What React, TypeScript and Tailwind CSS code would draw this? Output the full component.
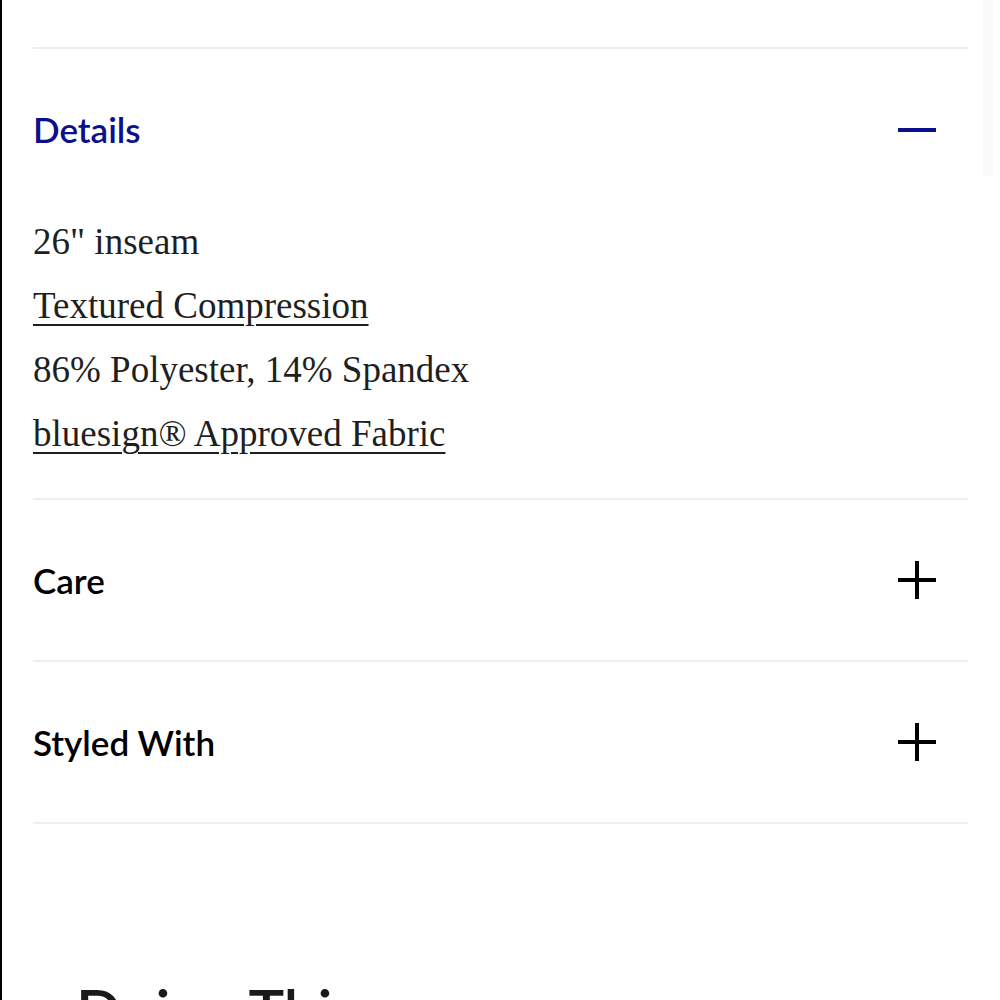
import React from 'react';

const Plus = () => (
  <svg width="38" height="38" viewBox="0 0 38 38" className="shrink-0">
    <rect x="0" y="17" width="38" height="4" fill="#000" />
    <rect x="17" y="0" width="4" height="38" fill="#000" />
  </svg>
);

const Minus = () => (
  <svg width="38" height="38" viewBox="0 0 38 38" className="shrink-0">
    <rect x="0" y="17" width="38" height="4" fill="#0b108e" />
  </svg>
);

const details = [
  { text: '26" inseam', link: false },
  { text: 'Textured Compression', link: true },
  { text: '86% Polyester, 14% Spandex', link: false },
  { text: 'bluesign\u00ae Approved Fabric', link: true },
];

export default function App() {
  return (
    <div className="relative h-[1000px] overflow-hidden bg-white border-l-2 border-black pl-[31px] pr-[32px] pt-[47px]">
      <div className="absolute right-[7px] top-0 h-[176px] w-[10px] bg-[#fafafa]" />

      <div className="border-t-2 border-[#eeeeee]" />

      <div className="flex h-[161px] items-center justify-between pr-[32px]">
        <h3 className="text-[35px] font-semibold text-[#0b108e] font-['Lato',sans-serif]">Details</h3>
        <Minus />
      </div>

      <ul className="pb-[32px] font-['Liberation_Serif',serif] text-[37px] leading-[64px] text-[#1f1f1f]">
        {details.map((d) => (
          <li key={d.text}>
            <span className={d.link ? 'underline decoration-2 underline-offset-[6px]' : ''}>{d.text}</span>
          </li>
        ))}
      </ul>

      <div className="border-t-2 border-[#eeeeee]" />
      <div className="flex h-[160px] items-center justify-between pr-[32px]">
        <h3 className="text-[35px] font-semibold text-black font-['Lato',sans-serif]">Care</h3>
        <Plus />
      </div>

      <div className="border-t-2 border-[#eeeeee]" />
      <div className="flex h-[160px] items-center justify-between pr-[32px]">
        <h3 className="text-[35px] font-semibold text-black font-['Lato',sans-serif]">Styled With</h3>
        <Plus />
      </div>

      <div className="border-t-2 border-[#eeeeee]" />

      <h2 className="mt-[156px] ml-[43px] text-[60px] font-semibold leading-none text-[#1a1a1a] font-['Lato',sans-serif]">
        Doing Things
      </h2>
    </div>
  );
}
